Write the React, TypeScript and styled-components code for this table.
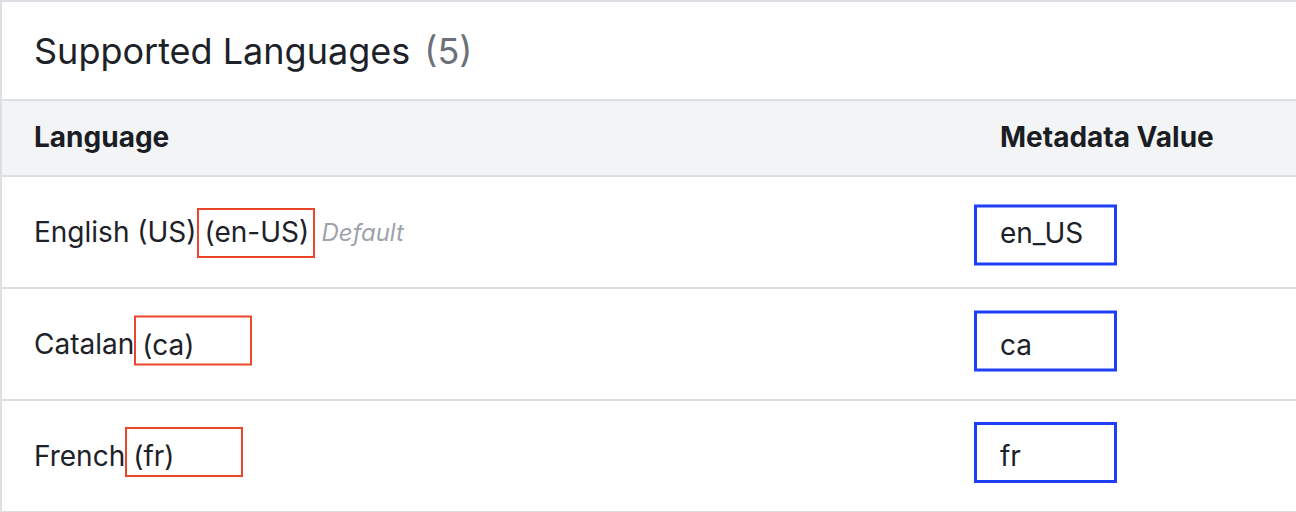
import React from "react";
import styled, { createGlobalStyle } from "styled-components";

const GlobalStyle = createGlobalStyle`
  html, body { margin: 0; padding: 0; background: #ffffff; }
  body { font-family: Inter, "Noto Sans", "Liberation Sans", sans-serif; color: #1d2128; }
  * { box-sizing: border-box; }
`;

const Panel = styled.section`
  width: 1320px;
  height: 512px;
  border-top: 2px solid #dcdfe4;
  border-left: 2px solid #dcdfe4;
  overflow: hidden;
`;

const TitleBar = styled.header`
  height: 99px;
  display: flex;
  align-items: center;
  gap: 14px;
  padding-left: 32px;
  border-bottom: 2px solid #dcdfe4;
`;

const Title = styled.h2`
  margin: 0;
  font-size: 36px;
  font-weight: 400;
  color: #1d2128;
`;

const Count = styled.span`
  font-size: 36px;
  color: #6b7079;
`;

const Table = styled.div`
  display: grid;
  grid-template-columns: 966px 1fr;
`;

const HeadCell = styled.div`
  height: 76px;
  display: flex;
  align-items: center;
  padding-left: 32px;
  padding-bottom: 2px;
  background: #f3f4f6;
  border-bottom: 2px solid #dcdfe4;
  font-size: 28px;
  font-weight: 700;
  color: #1a1d23;
`;

const Cell = styled.div<{ $value?: boolean }>`
  height: 112px;
  display: flex;
  align-items: center;
  padding-left: ${(p) => (p.$value ? "6px" : "32px")};
  border-bottom: 2px solid #dcdfe4;
  font-size: 28px;
  color: #1d2128;
`;

const Name = styled.span`
  white-space: pre;
`;

const shiftStyle = (s: number) => `
  transform: translateY(${s}px);
  padding-top: ${Math.max(0, -2 * s)}px;
  padding-bottom: ${Math.max(0, 2 * s)}px;
`;

const CodeBox = styled.span<{ $shift: number }>`
  display: inline-flex;
  align-items: center;
  width: 118px;
  height: 50px;
  margin-left: 0px;
  padding-left: 6px;
  border: 2px solid #e8472c;
  ${(p) => shiftStyle(p.$shift)}
`;

const DefaultTag = styled.span`
  margin-left: 7px;
  font-size: 24px;
  font-style: italic;
  color: #9ea3ab;
`;

const ValueBox = styled.span<{ $shift: number }>`
  display: inline-flex;
  align-items: center;
  width: 143px;
  height: 61px;
  padding-left: 23px;
  border: 3px solid #1f3ef7;
  ${(p) => shiftStyle(p.$shift)}
`;

type Lang = {
  name: string;
  code: string;
  value: string;
  isDefault?: boolean;
  codeShift: number;
  valueShift: number;
};

const langs: Lang[] = [
  { name: "English (US)", code: "(en-US)", value: "en_US", isDefault: true, codeShift: 1, valueShift: 2.5 },
  { name: "Catalan", code: "(ca)", value: "ca", codeShift: -3.5, valueShift: -3.5 },
  { name: "French", code: "(fr)", value: "fr", codeShift: -4, valueShift: -4 },
];

export default function App() {
  return (
    <>
      <GlobalStyle />
      <Panel>
        <TitleBar>
          <Title>Supported Languages</Title>
          <Count>(5)</Count>
        </TitleBar>
        <Table>
          <HeadCell>Language</HeadCell>
          <HeadCell>Metadata Value</HeadCell>
          {langs.map((l) => (
            <React.Fragment key={l.code}>
              <Cell>
                <Name>{l.name}</Name>
                <CodeBox $shift={l.codeShift}>{l.code}</CodeBox>
                {l.isDefault && <DefaultTag>Default</DefaultTag>}
              </Cell>
              <Cell $value>
                <ValueBox $shift={l.valueShift}>{l.value}</ValueBox>
              </Cell>
            </React.Fragment>
          ))}
        </Table>
      </Panel>
    </>
  );
}
